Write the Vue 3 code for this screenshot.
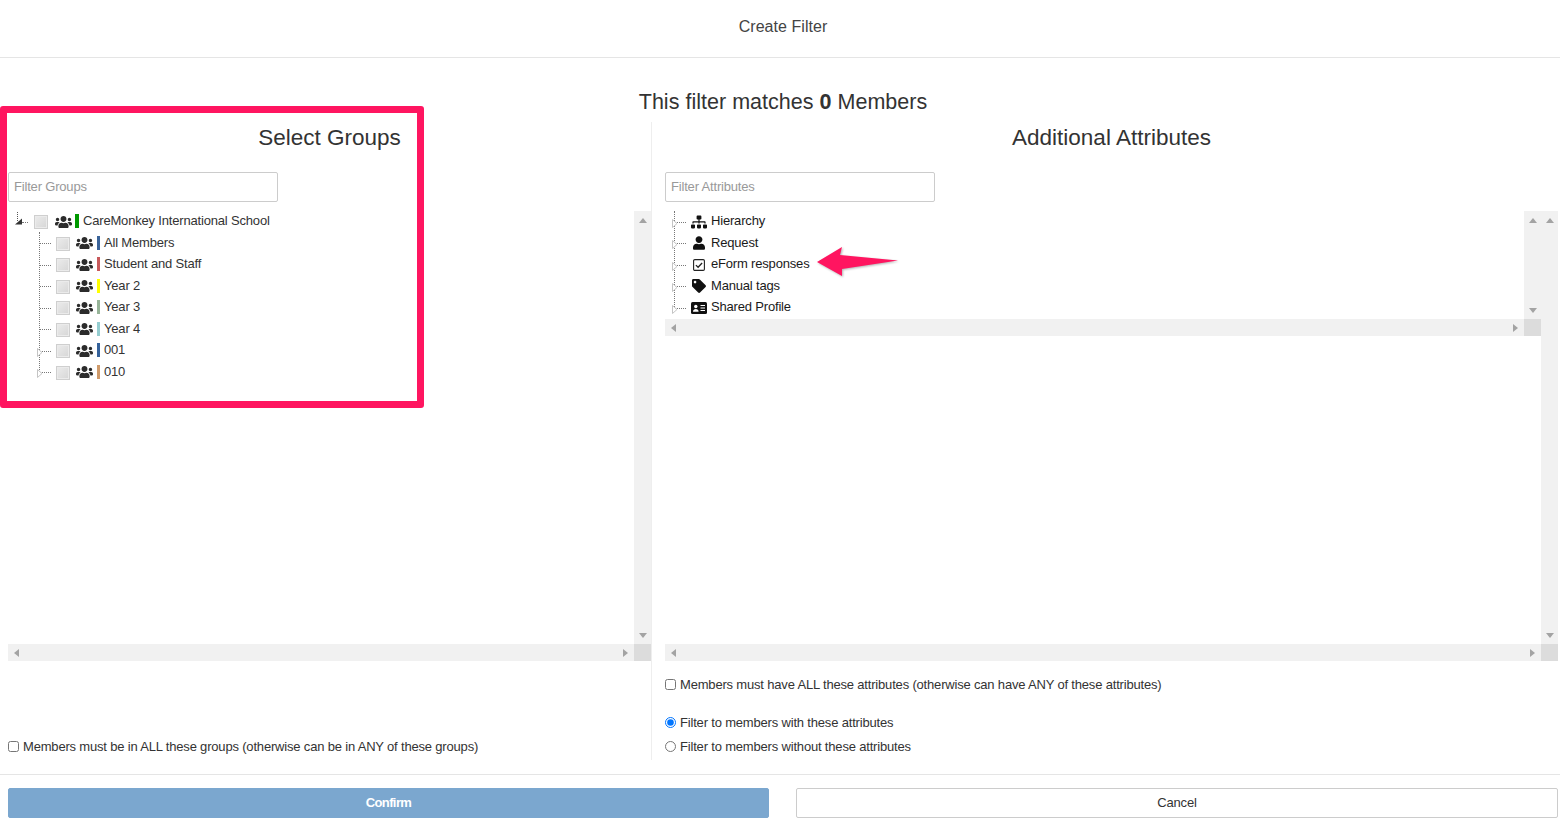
<script setup>
const usersPath = 'M96 224c35.3 0 64-28.7 64-64s-28.7-64-64-64-64 28.7-64 64 28.7 64 64 64zm448 0c35.3 0 64-28.7 64-64s-28.7-64-64-64-64 28.7-64 64 28.7 64 64 64zm32 32h-64c-17.6 0-33.5 7.1-45.1 18.6 40.3 22.1 68.9 62 75.1 109.4h66c17.7 0 32-14.3 32-32v-32c0-35.3-28.7-64-64-64zm-256 0c61.9 0 112-50.1 112-112S381.9 32 320 32 208 82.1 208 144s50.1 112 112 112zm76.8 32h-8.3c-20.8 10-43.9 16-68.5 16s-47.6-6-68.5-16h-8.3C179.6 288 128 339.6 128 403.2V432c0 26.5 21.5 48 48 48h288c26.5 0 48-21.5 48-48v-28.8c0-63.6-51.6-115.2-115.2-115.2zm-223.7-13.4C161.5 263.1 145.6 256 128 256H64c-35.3 0-64 28.7-64 64v32c0 17.7 14.3 32 32 32h65.9c6.3-47.4 34.9-87.3 75.2-109.4z'
const groups = [
  { name: 'All Members', color: '#3a6399' },
  { name: 'Student and Staff', color: '#c8595b' },
  { name: 'Year 2', color: '#ffff00' },
  { name: 'Year 3', color: '#97b498' },
  { name: 'Year 4', color: '#95cdd0' },
  { name: '001', color: '#35629b', closed: true },
  { name: '010', color: '#cf9a6a', closed: true }
]
const attributes = [
  { name: 'Hierarchy', key: 'sitemap' },
  { name: 'Request', key: 'user' },
  { name: 'eForm responses', key: 'check' },
  { name: 'Manual tags', key: 'tag' },
  { name: 'Shared Profile', key: 'card' }
]
</script>

<template>
  <div class="page">
    <header class="top">Create Filter</header>
    <div class="matches">This filter matches <b>0</b> Members</div>

    <main class="columns">
      <section class="col col-left">
        <h2>Select Groups</h2>
        <input class="filter" placeholder="Filter Groups" />
        <div class="pane">
          <div class="pane-body">
            <div class="row root">
              <svg class="opened" width="8" height="15" viewBox="0 0 8 15"><path d="M2.500 1v9" stroke="#555" stroke-dasharray="1 1" fill="none"/><path d="M0 13.500L7 7.500v6z" fill="#333"/></svg>
              <span class="twig root-twig"></span>
              <span class="box"></span>
              <svg class="users" viewBox="0 0 640 512"><path :d="usersPath"/></svg>
              <span class="bar" style="background:#009900"></span>
              <span>CareMonkey International School</span>
            </div>
            <div class="branch branch-left">
              <div v-for="g in groups" :key="g.name" class="row">
                <svg v-if="g.closed" class="closed" width="6" height="9" viewBox="0 0 6 9"><path d="M.5.5L5 4.500.5 8.500z" fill="#fff" stroke="#c4c4c4"/></svg>
                <span class="twig"></span>
                <span class="box"></span>
                <svg class="users" viewBox="0 0 640 512"><path :d="usersPath"/></svg>
                <span class="bar" :style="{ background: g.color }"></span>
                <span>{{ g.name }}</span>
              </div>
            </div>
          </div>
          <div class="vbar"><i class="up"></i><i class="down"></i></div>
          <div class="hbar"><i class="left"></i><i class="right"></i></div>
          <div class="corner"></div>
        </div>
        <label class="option opt-bottom"><input type="checkbox" />Members must be in ALL these groups (otherwise can be in ANY of these groups)</label>
      </section>

      <section class="col col-right">
        <h2>Additional Attributes</h2>
        <input class="filter" placeholder="Filter Attributes" />
        <div class="pane">
          <div class="pane-body">
            <div class="pane inner">
              <div class="pane-body">
                <div class="branch branch-right">
                  <div v-for="a in attributes" :key="a.name" class="row attr">
                    <svg class="closed" width="6" height="9" viewBox="0 0 6 9"><path d="M.5.5L5 4.500.5 8.500z" fill="#fff" stroke="#c4c4c4"/></svg>
                    <span class="twig"></span>
                    <span class="attr-icon">
                      <svg v-if="a.key === 'sitemap'" width="17" height="14" viewBox="0 0 640 512"><path d="M128 352H32c-17.67 0-32 14.33-32 32v96c0 17.67 14.33 32 32 32h96c17.67 0 32-14.33 32-32v-96c0-17.67-14.33-32-32-32zm-24-80h192v48h48v-48h192v48h48v-57.59c0-21.17-17.23-38.41-38.41-38.41H344v-64h40c17.67 0 32-14.33 32-32V32c0-17.67-14.33-32-32-32H256c-17.67 0-32 14.33-32 32v96c0 17.67 14.33 32 32 32h40v64H94.41C73.23 224 56 241.23 56 262.41V320h48v-48zm264 80h-96c-17.67 0-32 14.33-32 32v96c0 17.67 14.33 32 32 32h96c17.67 0 32-14.33 32-32v-96c0-17.67-14.33-32-32-32zm240 0h-96c-17.67 0-32 14.33-32 32v96c0 17.67 14.33 32 32 32h96c17.67 0 32-14.33 32-32v-96c0-17.67-14.33-32-32-32z"/></svg>
                      <svg v-else-if="a.key === 'user'" width="12" height="14" viewBox="0 0 448 512"><path d="M224 256c70.7 0 128-57.3 128-128S294.7 0 224 0 96 57.3 96 128s57.3 128 128 128zm89.6 32h-16.7c-22.2 10.2-46.9 16-72.9 16s-50.6-5.8-72.9-16h-16.7C60.2 288 0 348.2 0 422.4V464c0 26.5 21.5 48 48 48h352c26.5 0 48-21.5 48-48v-41.6c0-74.2-60.2-134.4-134.4-134.4z"/></svg>
                      <svg v-else-if="a.key === 'check'" width="12" height="12" viewBox="0 0 12 12"><rect x=".6" y=".6" width="10.800" height="10.800" rx="1.200" fill="none" stroke="#222" stroke-width="1.100"/><path d="M2.900 6.100l2.200 2.200 4-4.300" fill="none" stroke="#222" stroke-width="1.300"/></svg>
                      <svg v-else-if="a.key === 'tag'" width="14" height="14" viewBox="0 0 512 512"><path d="M0 252.118V48C0 21.49 21.49 0 48 0h204.118a48 48 0 0 1 33.941 14.059l211.882 211.882c18.745 18.745 18.745 49.137 0 67.882L293.823 497.941c-18.745 18.745-49.137 18.745-67.882 0L14.059 286.059A48 48 0 0 1 0 252.118zM112 64c-26.51 0-48 21.49-48 48s21.49 48 48 48 48-21.49 48-48-21.49-48-48-48z"/></svg>
                      <svg v-else width="16" height="12" viewBox="0 0 16 12"><rect width="16" height="12" rx="1.500" fill="#111"/><circle cx="4.800" cy="4.500" r="1.700" fill="#fff"/><path d="M2 9.800c0-1.800 1.200-2.800 2.800-2.800s2.800 1 2.800 2.800z" fill="#fff"/><path d="M9.500 3.500h4.500M9.500 6h4.500M9.500 8.500h4.500" stroke="#fff" stroke-width="1.200"/></svg>
                    </span>
                    <span>{{ a.name }}</span>
                  </div>
                </div>
              </div>
              <div class="vbar"><i class="up"></i><i class="down"></i></div>
              <div class="hbar"><i class="left"></i><i class="right"></i></div>
              <div class="corner"></div>
            </div>
          </div>
          <div class="vbar"><i class="up"></i><i class="down"></i></div>
          <div class="hbar"><i class="left"></i><i class="right"></i></div>
          <div class="corner"></div>
        </div>
        <label class="option opt-all"><input type="checkbox" />Members must have ALL these attributes (otherwise can have ANY of these attributes)</label>
        <label class="option opt-with"><input type="radio" name="mode" checked />Filter to members with these attributes</label>
        <label class="option opt-without"><input type="radio" name="mode" />Filter to members without these attributes</label>
      </section>
    </main>

    <footer class="actions">
      <button class="btn confirm" disabled>Confirm</button>
      <button class="btn cancel">Cancel</button>
    </footer>

    <div class="highlight"></div>
    <svg class="arrow" width="86" height="34" viewBox="0 0 86 34">
      <path d="M1 16L26 1 24 9 82 14.500 26 23 26 30z" fill="#ff1560"/>
    </svg>
  </div>
</template>

<style>
html, body { margin: 0; background: #fff; }
</style>

<style scoped>
.page {
  position: relative;
  width: 1560px;
  height: 824px;
  overflow: hidden;
  font-family: "Liberation Sans", Arial, sans-serif;
  font-size: 13px;
  letter-spacing: -0.18px;
  line-height: 20px;
  color: #333;
  box-sizing: border-box;
}
.top {
  height: 57px;
  line-height: 54px;
  border-bottom: 1px solid #e5e5e5;
  text-align: center;
  font-size: 16px;
  letter-spacing: 0.05px;
  padding-left: 6px;
  color: #444;
}
.matches {
  height: 64px;
  box-sizing: border-box;
  padding-top: 31px;
  line-height: 26px;
  font-size: 21.5px;
  letter-spacing: 0.02px;
  text-align: center;
  padding-left: 6px;
}
.columns {
  display: flex;
  height: 638px;
}
.col {
  display: flex;
  flex-direction: column;
  min-width: 0;
}
.col-left {
  width: 652px;
  box-sizing: border-box;
  padding-left: 8px;
  border-right: 1px solid #eee;
}
.col-right {
  width: 908px;
  box-sizing: border-box;
  padding: 0 2px 0 13px;
}
h2 {
  margin: 0 0 20px;
  padding-top: 1px;
  height: 29px;
  font-weight: 400;
  font-size: 22.5px;
  letter-spacing: 0;
  line-height: 29px;
  text-align: center;
  color: #333;
}
.filter {
  width: 270px;
  height: 30px;
  box-sizing: border-box;
  padding: 0 5px 2px;
  border: 1px solid #ccc;
  border-radius: 2px;
  font: inherit;
  letter-spacing: inherit;
  outline: none;
  flex: none;
}
.filter::placeholder { color: #999; opacity: 1; }
.pane {
  display: grid;
  grid-template-columns: 1fr 17px;
  grid-template-rows: 1fr 17px;
  height: 450px;
  margin-top: 9px;
  flex: none;
}
.pane.inner {
  height: 125px;
  margin-top: 0;
}
.pane-body { min-width: 0; min-height: 0; }
.vbar, .hbar {
  background: #f1f1f1;
  display: flex;
  align-items: center;
  justify-content: space-between;
  box-sizing: border-box;
}
.vbar { flex-direction: column; padding: 7px 0 6px; }
.hbar { padding: 0 6px; }
.corner { background: #dcdcdc; }
.vbar i, .hbar i { display: block; width: 0; height: 0; border: 4px solid transparent; }
.vbar .up { border-top: 0; border-bottom: 5px solid #a3a3a3; }
.vbar .down { border-bottom: 0; border-top: 5px solid #a3a3a3; }
.hbar .left { border-left: 0; border-right: 5px solid #a3a3a3; }
.hbar .right { border-right: 0; border-left: 5px solid #a3a3a3; }

.row {
  position: relative;
  display: flex;
  align-items: center;
  height: 21.5px;
  white-space: nowrap;
}
.root {
  margin-top: -0.5px;
  padding-left: 7px;
}
.opened {
  flex: none;
  margin-bottom: 5px;
}
.twig {
  flex: none;
  width: 11px;
  height: 0;
  margin-top: 2px;
  border-top: 1px dotted #777;
}
.root-twig { width: 6px; margin-right: 6px; margin-left: -1px; }
.box {
  flex: none;
  width: 14px;
  height: 14px;
  box-sizing: border-box;
  margin: 2px 6px 0 5px;
  border: 1px solid #cfcfcf;
  background: linear-gradient(135deg, #ececec, #d6d6d6);
  box-shadow: inset 0 0 0 1px #ebebeb;
}
.users {
  flex: none;
  width: 17px;
  height: 14px;
  margin-top: 1px;
  fill: #2b2b2b;
}
.bar {
  flex: none;
  width: 3px;
  height: 14px;
  margin: 0 4px;
}
.root .bar { width: 4px; margin: 0 4px 0 3px; }
.root .box { margin-right: 7px; margin-left: 0; }
.branch {
  border-left: 1px dotted #777;
  box-sizing: border-box;
}
.branch-left { margin-left: 31px; height: 140px; }
.branch-right { margin-left: 9px; height: 100px; margin-top: -0.5px; color: #1a1a1a; }
.closed {
  position: absolute;
  left: -3px;
  top: 8px;
}
.attr-icon {
  flex: none;
  width: 16px;
  height: 16px;
  margin: 1px 4px 0 5px;
  display: flex;
  align-items: center;
  justify-content: center;
  fill: #111;
}

.option {
  display: flex;
  align-items: center;
  height: 20px;
  flex: none;
  color: #333;
}
.option input { margin: 0 4px 1px 0; flex: none; width: 11px; height: 11px; }
.opt-bottom { margin-top: auto; margin-bottom: 3px; }
.opt-all { margin-top: 14px; }
.opt-with { margin-top: 18px; }
.opt-without { margin-top: 4px; }

.actions {
  position: absolute;
  left: 0;
  right: 0;
  top: 774px;
  border-top: 1px solid #e5e5e5;
  display: flex;
  justify-content: space-between;
  padding: 13px 2px 0 8px;
}
.btn {
  height: 30px;
  padding: 0;
  border-radius: 2px;
  font: inherit;
  letter-spacing: inherit;
  box-sizing: border-box;
}
.confirm {
  width: 761px;
  background: #7ba7cf;
  border: 1px solid #7ba7cf;
  color: #fff;
  font-weight: 700;
  letter-spacing: -0.6px;
}
.cancel {
  width: 762px;
  background: #fff;
  border: 1px solid #ccc;
  color: #333;
}

.highlight {
  position: absolute;
  left: 0;
  top: 106px;
  width: 424px;
  height: 302px;
  box-sizing: border-box;
  border: 7px solid #ff1560;
  border-radius: 3px;
  pointer-events: none;
}
.arrow {
  position: absolute;
  left: 816px;
  top: 246px;
  filter: drop-shadow(1px 1px 1px rgba(0,0,0,.3));
}
</style>
